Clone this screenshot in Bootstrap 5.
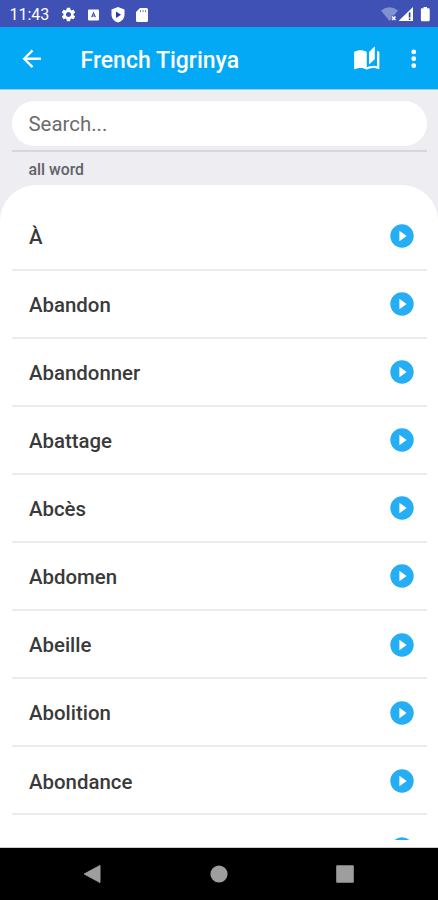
<!DOCTYPE html>
<html lang="fr">
<head>
<meta charset="utf-8">
<meta name="viewport" content="width=device-width, initial-scale=1">
<title>French Tigrinya</title>
<link href="https://cdn.jsdelivr.net/npm/bootstrap@5.3.0/dist/css/bootstrap.min.css" rel="stylesheet">
<style>
body{font-family:Roboto,"Noto Sans",sans-serif;background:#ededf2;height:900px}
svg{display:block;flex:none}
.status-bar{height:27px;background:#3f51b5;padding:2px 7px 0 9.5px;font-size:16px;line-height:1}
.status-icons{gap:9px;margin-left:11px}
.app-bar{height:63px;background:#03a9f4;padding:2px 11px 0 18px;border-bottom:1px solid #9bcdea}
.app-title{font-size:23px;font-weight:500;margin:2px 0 0 35px;line-height:1}
.book-icon{margin-right:19px}
.search-area{height:95px;padding:11px 11px 0 12px}
.search-box{height:45px;background:#fff;border:0;border-radius:23px;padding:1px 16px 0 16.5px;font-size:20.4px;color:#666;width:100%;outline:0}
.search-box::placeholder{color:#6c6c6c;opacity:1}
.search-line{height:2px;background:#d7d6db;margin-top:4px}
.filter-label{font-size:15.8px;font-weight:500;color:#626267;line-height:1;padding:10px 16px 0 16.5px}
.word-panel{height:663px;background:#fff;border-radius:36px 36px 0 0;padding:17px 11px 7px 12px;border-bottom:1px solid #ccc}
.word-row{height:68.1px;flex:none;padding:1px 13.5px 0 17px;border-bottom:2px solid #ececec;font-size:20.4px;font-weight:500;color:#3a3a3a;line-height:1}
.word-row span{padding-top:2px}
.word-row:first-child{height:68.500px}
.nav-keys{height:52px;background:#000;padding:0 84px 0 83px}
</style>
<script src="https://cdn.jsdelivr.net/npm/bootstrap@5.3.0/dist/js/bootstrap.bundle.min.js"></script>
</head>
<body class="d-flex flex-column overflow-hidden m-0">
<svg width="0" height="0" class="position-absolute" aria-hidden="true">
  <symbol id="play" viewBox="0 0 24 24"><circle cx="12" cy="12" r="11.7" fill="#25aef3"/><path d="M9.400 6.700v10.600l7.200-5.300z" fill="#fff"/></symbol>
</svg>
<header class="flex-shrink-0 text-white">
  <div class="status-bar d-flex align-items-center">
    <span>11:43</span>
    <div class="status-icons d-flex align-items-center">
      <svg width="17" height="17" viewBox="0 0 24 24" fill="#fff"><path d="M19.14 12.94c.04-.3.06-.61.06-.94 0-.32-.02-.64-.07-.94l2.03-1.58c.18-.14.23-.41.12-.61l-1.92-3.32c-.12-.22-.37-.29-.59-.22l-2.39.96c-.5-.38-1.03-.7-1.62-.94L14.4 2.81c-.04-.24-.24-.41-.48-.41h-3.84c-.24 0-.43.17-.47.41l-.36 2.54c-.59.24-1.13.57-1.62.94l-2.39-.96c-.22-.08-.47 0-.59.22L2.74 8.87c-.12.21-.08.47.12.61l2.03 1.58c-.05.3-.09.63-.09.94s.02.64.07.94l-2.03 1.58c-.18.14-.23.41-.12.61l1.92 3.32c.12.22.37.29.59.22l2.39-.96c.5.38 1.03.7 1.62.94l.36 2.54c.05.24.24.41.48.41h3.84c.24 0 .44-.17.47-.41l.36-2.54c.59-.24 1.13-.56 1.62-.94l2.39.96c.22.08.47 0 .59-.22l1.92-3.32c.12-.22.07-.47-.12-.61l-2.01-1.58zM12 15.6c-1.98 0-3.6-1.62-3.6-3.6s1.62-3.6 3.6-3.6 3.6 1.62 3.6 3.6-1.62 3.6-3.6 3.6z"/></svg>
      <svg width="15" height="14" viewBox="0 0 15 14"><rect x="2" y="1.5" width="11" height="11" rx="1" fill="#fff"/><path d="M5.600 9.300l1.900-4.500 1.900 4.500M6.200 8h2.600" fill="none" stroke="#3f51b5" stroke-width="1.100"/></svg>
      <svg width="16" height="18" viewBox="0 0 16 18"><path d="M8 1l6.500 2.500v5c0 4-2.800 7-6.500 8-3.700-1-6.500-4-6.500-8v-5z" fill="#fff"/><path d="M6 5.500v6.500l5-3.250z" fill="#2a3aa0"/></svg>
      <svg width="14" height="16" viewBox="0 0 14 16"><path d="M5 1h6.500q1.500 0 1.500 1.500v11q0 1.500-1.500 1.500h-9Q1 15 1 13.500V5z" fill="#fff"/><path d="M5.500 3v2.200M8 3v2.200M10.500 3v2.200" stroke="#7480c8"/></svg>
    </div>
    <div class="ms-auto d-flex align-items-center">
      <svg width="50" height="17" viewBox="0 0 50 17"><path d="M0 4.500Q8.500-2 17 4.500L13 9.500h-2.500v3L8.500 15z" fill="#8190d1"/><path d="M11 10.500l3.500 3.500m0-3.500L11 14" stroke="#fff" stroke-width="1.600"/><path d="M32 1v14H17.500z" fill="#fff"/><path d="M28.600 6.500v5m0 1v1.500" stroke="#26378f" stroke-width="1.600"/><path d="M42.500 1h3.500v1.300h1.700q1 0 1 1v11q0 1-1 1h-6.800q-1 0-1-1v-11q0-1 1-1h1.600z" fill="#fff"/></svg>
    </div>
  </div>
  <div class="app-bar d-flex align-items-center">
    <svg width="27.500" height="27.500" viewBox="0 0 24 24" fill="#fff"><path d="M20 11H7.830l5.590-5.590L12 4l-8 8 8 8 1.410-1.410L7.830 13H20v-2z"/></svg>
    <h1 class="app-title">French Tigrinya</h1>
    <svg class="book-icon ms-auto" width="27.500" height="27.500" viewBox="0 0 24 24" fill="#fff"><path d="M19 1l-5 5v11l5-4.500V1zM1 6v14.650c0 .25.25.5.5.5.1 0 .15-.05.25-.05C3.100 20.450 5.050 20 6.500 20c1.950 0 4.050.4 5.500 1.500V6c-1.450-1.100-3.550-1.500-5.500-1.500S2.450 4.900 1 6zm22 13.500V6c-.6-.45-1.250-.75-2-1v13.500c-1.100-.35-2.300-.5-3.500-.5-1.700 0-4.150.65-5.500 1.500v2c1.350-.85 3.800-1.500 5.500-1.500 1.650 0 3.350.3 4.750 1.050.1.05.15.05.25.05.25 0 .5-.25.5-.5v-1.100z"/></svg>
    <svg width="27.500" height="27.500" viewBox="0 0 24 24" fill="#fff"><circle cx="12" cy="6" r="2.100"/><circle cx="12" cy="12" r="2.100"/><circle cx="12" cy="18" r="2.100"/></svg>
  </div>
</header>
<section class="search-area flex-shrink-0">
  <input class="search-box d-block" type="text" placeholder="Search..." aria-label="Search">
  <div class="search-line"></div>
  <div class="filter-label">all word</div>
</section>
<main class="word-panel flex-shrink-0">
  <div class="d-flex flex-column h-100 overflow-hidden">
    <div class="word-row d-flex align-items-center justify-content-between"><span>À</span><svg width="24" height="24"><use href="#play"/></svg></div>
    <div class="word-row d-flex align-items-center justify-content-between"><span>Abandon</span><svg width="24" height="24"><use href="#play"/></svg></div>
    <div class="word-row d-flex align-items-center justify-content-between"><span>Abandonner</span><svg width="24" height="24"><use href="#play"/></svg></div>
    <div class="word-row d-flex align-items-center justify-content-between"><span>Abattage</span><svg width="24" height="24"><use href="#play"/></svg></div>
    <div class="word-row d-flex align-items-center justify-content-between"><span>Abcès</span><svg width="24" height="24"><use href="#play"/></svg></div>
    <div class="word-row d-flex align-items-center justify-content-between"><span>Abdomen</span><svg width="24" height="24"><use href="#play"/></svg></div>
    <div class="word-row d-flex align-items-center justify-content-between"><span>Abeille</span><svg width="24" height="24"><use href="#play"/></svg></div>
    <div class="word-row d-flex align-items-center justify-content-between"><span>Abolition</span><svg width="24" height="24"><use href="#play"/></svg></div>
    <div class="word-row d-flex align-items-center justify-content-between"><span>Abondance</span><svg width="24" height="24"><use href="#play"/></svg></div>
    <div class="word-row d-flex align-items-center justify-content-end"><svg width="24" height="24"><use href="#play"/></svg></div>
  </div>
</main>
<footer class="nav-keys flex-shrink-0 d-flex align-items-center justify-content-between">
  <svg width="18" height="20" viewBox="0 0 18 20"><path d="M17 1.500v17L1.200 10z" fill="#9e9e9e" stroke="#9e9e9e" stroke-linejoin="round"/></svg>
  <svg width="18" height="18" viewBox="0 0 18 18"><circle cx="9" cy="9" r="8.600" fill="#9e9e9e"/></svg>
  <svg width="18" height="18" viewBox="0 0 18 18"><rect x=".2" y=".2" width="17.600" height="17.600" rx="1" fill="#9e9e9e"/></svg>
</footer>
</body>
</html>
